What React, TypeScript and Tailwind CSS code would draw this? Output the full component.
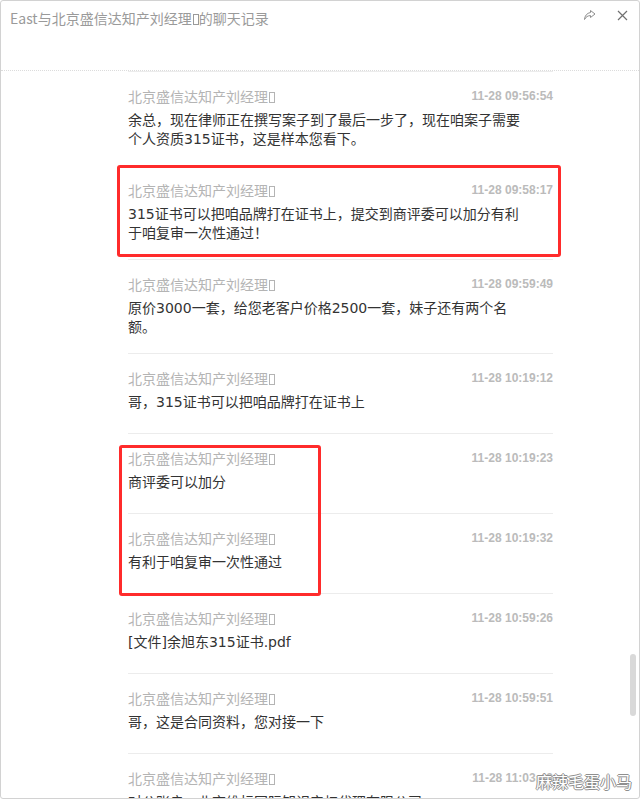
import type { ReactNode } from "react";

interface Msg {
  time: string;
  text: string;
}

const NAME = "北京盛信达知产刘经理";

const messages: Msg[] = [
  { time: "11-28 09:56:54", text: "余总，现在律师正在撰写案子到了最后一步了，现在咱案子需要个人资质315证书，这是样本您看下。" },
  { time: "11-28 09:58:17", text: "315证书可以把咱品牌打在证书上，提交到商评委可以加分有利于咱复审一次性通过！" },
  { time: "11-28 09:59:49", text: "原价3000一套，给您老客户价格2500一套，妹子还有两个名额。" },
  { time: "11-28 10:19:12", text: "哥，315证书可以把咱品牌打在证书上" },
  { time: "11-28 10:19:23", text: "商评委可以加分" },
  { time: "11-28 10:19:32", text: "有利于咱复审一次性通过" },
  { time: "11-28 10:59:26", text: "[文件]余旭东315证书.pdf" },
  { time: "11-28 10:59:51", text: "哥，这是合同资料，您对接一下" },
  { time: "11-28 11:03:43", text: "对公账户：北京维标国际知识产权代理有限公司" },
];

function Tofu() {
  return <span className="ml-[1px] inline-block h-[11px] w-[6px] border border-current align-[-1px]" />;
}

function Name({ children }: { children: ReactNode }) {
  return (
    <span className="text-[14px] leading-[18px] text-[#b4b4b4]">
      {children}
      <Tofu />
    </span>
  );
}

function ShareIcon() {
  return (
    <svg width="13" height="12" viewBox="0 0 13 12" fill="none" stroke="#8c8c8c" strokeWidth="1" strokeLinejoin="round">
      <path d="M7.5 1.5 L12 5 L7.5 8.5 V6.6 C4.8 6.6 3 7.8 1.5 10.5 C1.8 6.6 4 4.1 7.5 3.5 Z" />
    </svg>
  );
}

function CloseIcon() {
  return (
    <svg width="11" height="11" viewBox="0 0 11 11" stroke="#707070" strokeWidth="1.2">
      <path d="M1 1 L10 10 M10 1 L1 10" />
    </svg>
  );
}

function Row({ msg }: { msg: Msg }) {
  return (
    <div className="border-b border-[#ececec] pt-[15px] pb-[16px]">
      <div className="flex h-[18px] items-center justify-between">
        <Name>{NAME}</Name>
        <span className="text-[12px] font-semibold text-[#bbbbbb] [font-family:'Liberation_Sans',sans-serif]">{msg.time}</span>
      </div>
      <p className="mt-[6px] min-h-[24px] w-[396px] text-[14px] leading-[19px] text-[#333333] [font-family:'DejaVu_Sans','Noto_Sans_CJK_SC',sans-serif]">
        {msg.text}
      </p>
    </div>
  );
}

export default function App() {
  return (
    <div className="relative flex h-[799px] w-[640px] flex-col overflow-hidden rounded-[3px] border border-[#d2d2d2] bg-white [font-family:'Noto_Sans_CJK_SC','Noto_Sans',sans-serif]">
      <header className="flex h-[70px] shrink-0 items-start justify-between border-b border-dotted border-[#dcdcdc] pl-[9px] pr-[11px] pt-[7px]">
        <h1 className="text-[14px] leading-[20px] text-[#9a9a9a]">
          East与{NAME}
          <Tofu />
          的聊天记录
        </h1>
        <div className="flex items-center gap-[21px] pt-[1px]">
          <ShareIcon />
          <CloseIcon />
        </div>
      </header>

      <div className="flex-1 overflow-hidden">
        <div className="ml-[127px] w-[425px] border-t border-[#ececec]">
          {messages.map((m) => (
            <Row key={m.time} msg={m} />
          ))}
        </div>
      </div>

      {/* annotation boxes */}
      <div className="pointer-events-none absolute left-[116px] top-[164px] h-[92px] w-[444px] rounded-[3px] border-[3px] border-[#ff2b2b]" />
      <div className="pointer-events-none absolute left-[118px] top-[444px] h-[151px] w-[202px] rounded-[3px] border-[3px] border-[#ff2b2b]" />

      {/* scrollbar */}
      <div className="absolute right-[3px] top-[653px] h-[62px] w-[6px] rounded-full bg-[#d9d9d9]" />

      {/* watermark */}
      <div className="absolute left-[535px] top-[769px] text-[16px] leading-[22px] text-white [text-shadow:1px_0_0_#8f8f8f,-1px_0_0_#8f8f8f,0_1px_0_#8f8f8f,0_-1px_0_#8f8f8f]">
        麻辣毛蛋小马
      </div>
    </div>
  );
}
